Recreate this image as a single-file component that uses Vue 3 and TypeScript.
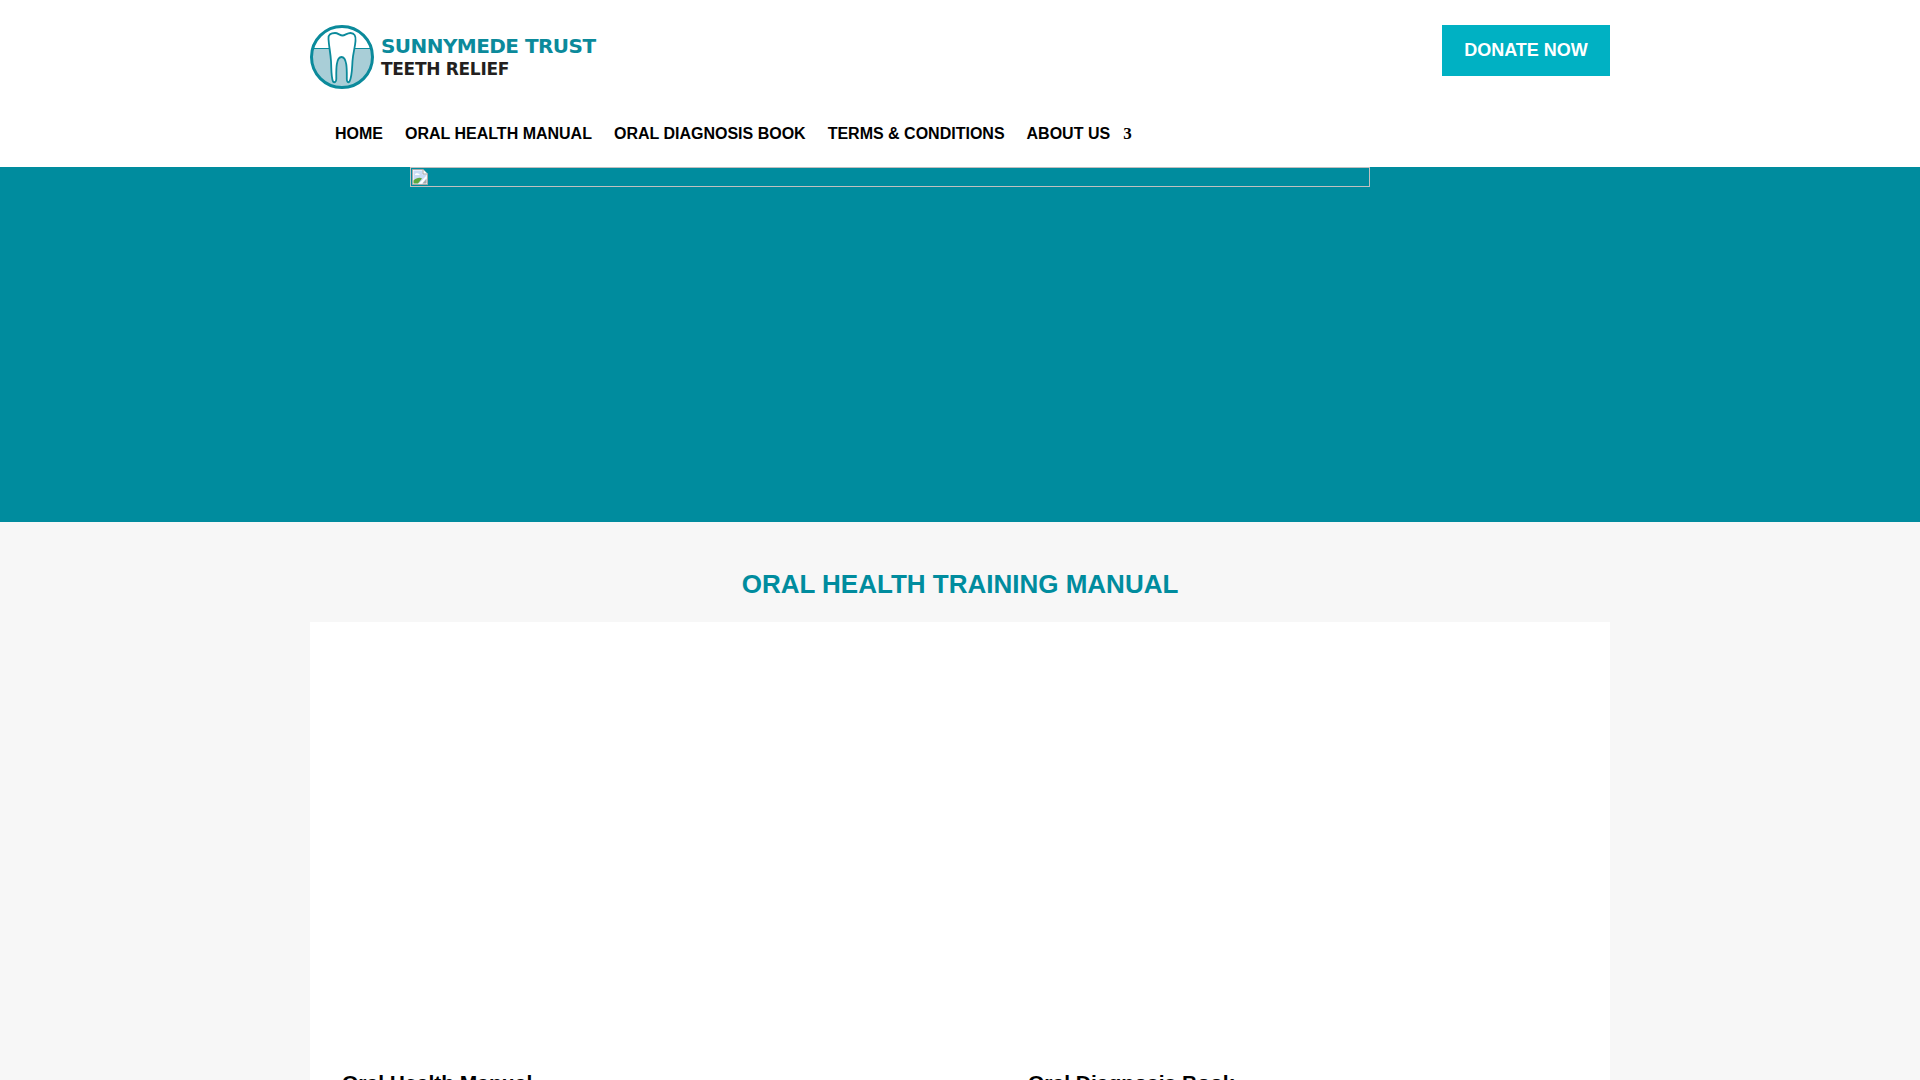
<template>
  <div class="page">
    <header class="site-header">
      <div class="container">
        <div class="header-top">
          <a class="logo" href="#">
            <svg class="logo-mark" width="64" height="64" viewBox="0 0 64 64">
              <defs>
                <clipPath id="logo-clip"><circle cx="32" cy="32" r="30.5" /></clipPath>
              </defs>
              <rect x="0" y="23" width="64" height="41" fill="#a9ced7" clip-path="url(#logo-clip)" />
              <line x1="0" y1="23.5" x2="64" y2="23.5" stroke="#0b8a9b" stroke-width="1.2" clip-path="url(#logo-clip)" />
              <circle cx="32" cy="32" r="30.5" fill="none" stroke="#0b8a9b" stroke-width="3" />
              <path
                d="M18.5 14C18 9.500 21 8 25 8C28 8 30 10.500 32.500 10.500C35 10.500 37 8 40.500 8C44.500 8 46 11 45.500 16C45 23 43 28 42.500 36C42 44 42 52 39.500 56.500C38 58 36.800 57 36.800 54C36.800 47 37.500 32 31.500 32C25.500 32 26.300 47 26.300 54C26.300 57 24.500 58 23 56.500C21 52 21.500 44 21 36C20.500 28 19 22 18.500 14Z"
                fill="#fff"
                stroke="#0b8a9b"
                stroke-width="1.8"
                stroke-linejoin="round"
              />
            </svg>
            <div class="logo-text">
              <span class="logo-name">SUNNYMEDE TRUST</span>
              <span class="logo-sub">TEETH RELIEF</span>
            </div>
          </a>
          <a class="donate-btn" href="#">DONATE NOW</a>
        </div>
        <nav class="main-nav">
          <a v-for="item in navItems" :key="item" class="nav-link" href="#">{{ item }}</a>
          <span class="nav-arrow">3</span>
        </nav>
      </div>
    </header>

    <section class="hero">
      <div class="hero-img">
        <svg width="16" height="16" viewBox="0 0 16 16">
          <path d="M0.500 0.500H11L15.500 5V15.500H0.500Z" fill="#fff" stroke="#a8a8a8" />
          <path d="M1.500 1.500H10.500V5.500H14.500V14.500H1.500Z" fill="#c9dcf6" />
          <path d="M3 5.500C3 4.500 5 4 6 4.500C7 4.700 8 5 7.500 6H3Z" fill="#fff" />
          <path d="M1.500 14.500V11.500C4 9 8 8 10 9.500L6 14.500Z" fill="#5da83d" />
          <path d="M7 14.500L14.500 6.500V9L10 14.500Z" fill="#fff" />
          <path d="M10.500 14.500L14.500 10V14.500Z" fill="#a8a8a8" />
          <path d="M11 0.500V5H15.500" fill="#fff" stroke="#a8a8a8" />
        </svg>
      </div>
    </section>

    <main class="content">
      <h1 class="title">ORAL HEALTH TRAINING MANUAL</h1>
      <div class="container">
        <div class="card">
          <article v-for="book in books" :key="book" class="book">
            <div class="book-cover"></div>
            <h3 class="book-title">{{ book }}</h3>
          </article>
        </div>
      </div>
    </main>
  </div>
</template>

<script setup lang="ts">
const navItems: string[] = [
  "HOME",
  "ORAL HEALTH MANUAL",
  "ORAL DIAGNOSIS BOOK",
  "TERMS & CONDITIONS",
  "ABOUT US",
];

const books: string[] = ["Oral Health Manual", "Oral Diagnosis Book"];
</script>

<style>
html,
body {
  margin: 0;
  overflow: hidden;
}
</style>

<style scoped>
.page {
  min-height: 1080px;
  background: #f7f7f7;
  font-family: "Liberation Sans", Arial, sans-serif;
}

.container {
  width: 1300px;
  margin: 0 auto;
}

/* header */
.site-header {
  height: 167px;
  background: #fff;
}

.header-top {
  display: flex;
  justify-content: space-between;
  align-items: flex-start;
  padding-top: 25px;
  height: 91px;
}

.logo {
  display: flex;
  align-items: flex-start;
  gap: 7px;
  text-decoration: none;
}

.logo-mark {
  display: block;
}

.logo-text {
  display: flex;
  flex-direction: column;
  padding-top: 9px;
}

.logo-name {
  font-family: "DejaVu Sans", sans-serif;
  font-size: 20px;
  line-height: 24px;
  font-weight: 700;
  letter-spacing: -0.55px;
  color: #0b8a9b;
  white-space: nowrap;
}

.logo-sub {
  font-family: "DejaVu Sans", sans-serif;
  font-size: 17px;
  line-height: 22px;
  font-weight: 700;
  letter-spacing: -0.3px;
  color: #231f20;
  white-space: nowrap;
}

.donate-btn {
  display: flex;
  align-items: center;
  justify-content: center;
  width: 168px;
  height: 51px;
  background: #00b1c3;
  color: #fff;
  font-size: 18px;
  font-weight: 700;
  text-decoration: none;
}

.main-nav {
  display: flex;
  align-items: baseline;
  gap: 22px;
  padding-left: 25px;
  padding-top: 8px;
}

.nav-link {
  color: #000;
  font-size: 16px;
  font-weight: 700;
  text-decoration: none;
  white-space: nowrap;
}

.nav-arrow {
  margin-left: -9px;
  font-family: "Liberation Serif", serif;
  font-size: 17px;
  font-weight: 700;
  color: #000;
}

/* hero */
.hero {
  height: 355px;
  padding-left: 410px;
  background: #008c9e;
}

.hero-img {
  box-sizing: border-box;
  width: 960px;
  height: 20px;
  padding: 1px;
  border: 1px solid #c0c0c0;
}

.hero-img svg {
  display: block;
}

/* content */
.content {
  padding-top: 44px;
}

.title {
  margin: 0 0 19px;
  text-align: center;
  font-size: 26px;
  line-height: 37px;
  font-weight: 700;
  color: #008c9e;
}

.card {
  display: grid;
  grid-template-columns: 686px 1fr;
  padding: 0 32px;
  background: #fff;
}

.book-cover {
  height: 447px;
}

.book-title {
  margin: 0;
  font-size: 21px;
  line-height: 28px;
  font-weight: 700;
  color: #000;
}
</style>
